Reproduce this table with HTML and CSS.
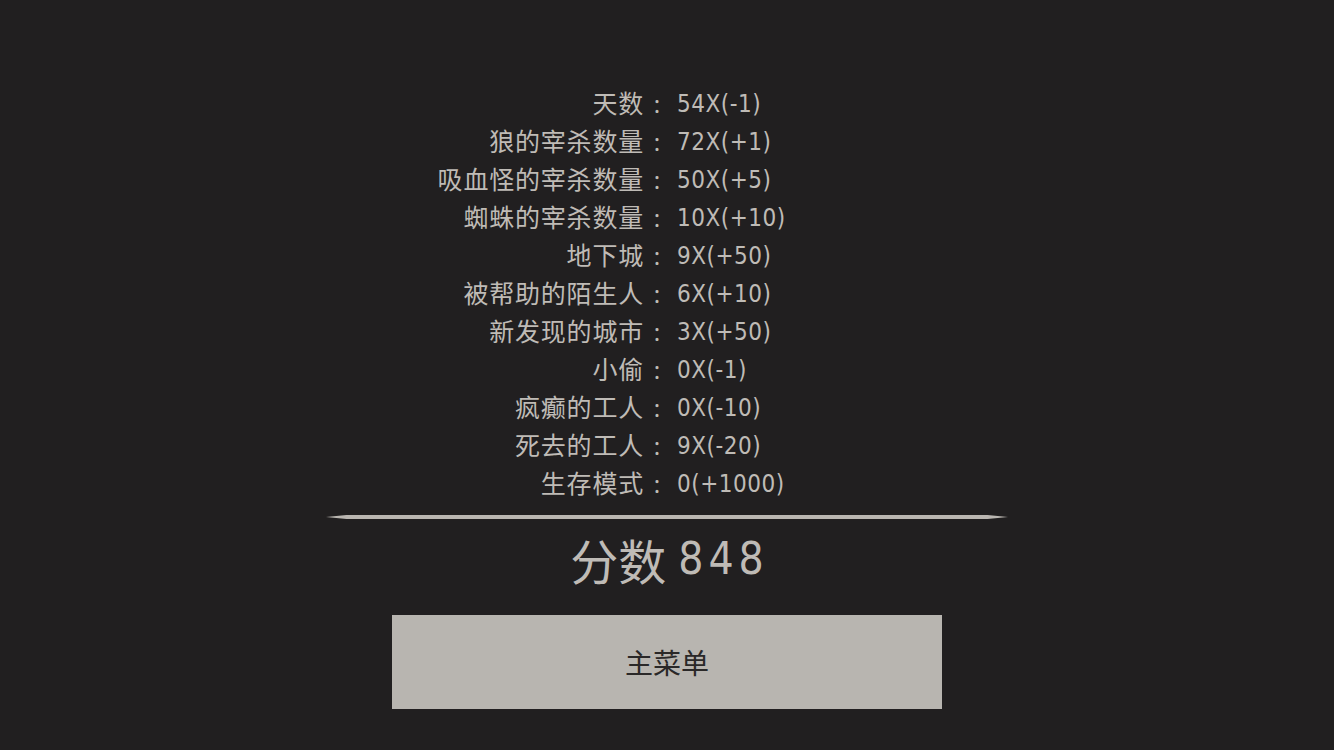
FILE: index.html
```html
<!DOCTYPE html>
<html lang="zh">
<head>
<meta charset="utf-8">
<link rel="stylesheet" href="styles.css">
</head>
<body>
<main class="screen">
  <section class="stats">
    <div class="label">天数<span class="colon">:</span></div><div class="value">54X(-1)</div>
    <div class="label">狼的宰杀数量<span class="colon">:</span></div><div class="value">72X(+1)</div>
    <div class="label">吸血怪的宰杀数量<span class="colon">:</span></div><div class="value">50X(+5)</div>
    <div class="label">蜘蛛的宰杀数量<span class="colon">:</span></div><div class="value">10X(+10)</div>
    <div class="label">地下城<span class="colon">:</span></div><div class="value">9X(+50)</div>
    <div class="label">被帮助的陌生人<span class="colon">:</span></div><div class="value">6X(+10)</div>
    <div class="label">新发现的城市<span class="colon">:</span></div><div class="value">3X(+50)</div>
    <div class="label">小偷<span class="colon">:</span></div><div class="value">0X(-1)</div>
    <div class="label">疯癫的工人<span class="colon">:</span></div><div class="value">0X(-10)</div>
    <div class="label">死去的工人<span class="colon">:</span></div><div class="value">9X(-20)</div>
    <div class="label">生存模式<span class="colon">:</span></div><div class="value">0(+1000)</div>
  </section>
  <div class="divider"></div>
  <div class="score"><span class="score-label">分数</span><span class="score-num">848</span></div>
  <button class="menu-btn">主菜单</button>
</main>
</body>
</html>
```
FILE: styles.css
```css
html, body {
  margin: 0;
  padding: 0;
  background: #211f20;
  height: 100%;
}
body {
  font-family: "Noto Sans CJK SC", "Noto Sans", sans-serif;
  color: #bfbbb6;
}
.screen {
  display: flex;
  flex-direction: column;
  align-items: center;
  padding-top: 84px;
}
.stats {
  display: grid;
  grid-template-columns: 1fr 1fr;
  grid-auto-rows: 38px;
  width: 100%;
  font-size: 25px;
}
.label {
  text-align: right;
  margin-right: -3px;
  letter-spacing: 0.8px;
  line-height: 36px;
}
.colon {
  display: inline-block;
  width: 26px;
  text-align: center;
  letter-spacing: 0;
  font-family: "Noto Sans", sans-serif;
  font-size: 24px;
  line-height: 1;
}
.value {
  padding-left: 10px;
  font-family: "DejaVu Sans Condensed", "DejaVu Sans", sans-serif;
  font-size: 24px;
  font-weight: 300;
  letter-spacing: 0.5px;
  line-height: 40px;
}
.divider {
  margin-top: 13px;
  width: 682px;
  height: 4px;
  background: #bab6b1;
  clip-path: polygon(0 50%, 3% 0, 97% 0, 100% 50%, 97% 100%, 3% 100%);
}
.score {
  margin-top: 10px;
  height: 60px;
  line-height: 60px;
  font-size: 48px;
  display: flex;
  align-items: center;
  gap: 12px;
}
.score-num {
  letter-spacing: 5px;
  font-family: "DejaVu Sans Condensed", "DejaVu Sans", sans-serif;
  font-size: 44px;
  margin-right: -5px;
}
.menu-btn {
  margin-top: 26px;
  width: 550px;
  height: 94px;
  border: none;
  background: #b8b5b0;
  color: #2a2828;
  font-family: "Noto Sans CJK SC", sans-serif;
  font-size: 28px;
  padding: 0;
}
```
